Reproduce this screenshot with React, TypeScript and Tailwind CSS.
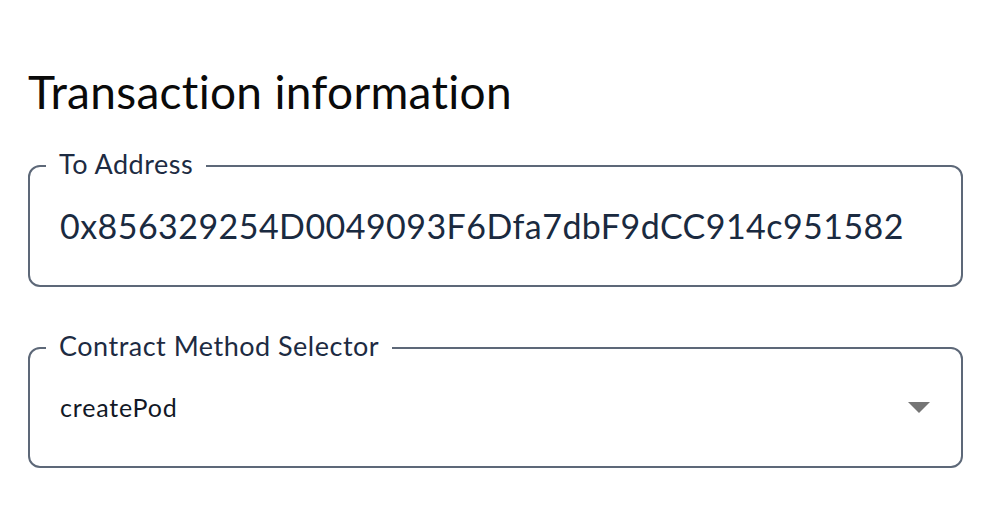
const font = { fontFamily: 'Lato, "Noto Sans", sans-serif' };

type OutlinedFieldProps = {
  label: string;
  children: React.ReactNode;
  className?: string;
};

const OutlinedField = ({ label, children, className }: OutlinedFieldProps) => (
  <div
    className={`relative flex items-center rounded-[12px] border-2 border-[#5d6878] pl-[30px] pr-[30px] ${className ?? ''}`}
  >
    <span className="absolute -top-[19px] left-[16px] bg-white px-[13px] text-[27px] leading-[32px] tracking-[0.5px] text-[#1d2b42]">
      {label}
    </span>
    {children}
  </div>
);

export default function App() {
  return (
    <div className="min-h-[508px] w-[1002px] bg-white pt-[64px] pl-[28px] pr-[39px]" style={font}>
      <h1 className="text-[46px] leading-[56px] font-normal tracking-[0.3px] text-[#0a0a0a]">
        Transaction information
      </h1>

      <OutlinedField label="To Address" className="mt-[45px] h-[122px]">
        <span className="text-[34px] leading-none tracking-[0.45px] text-[#1a2a40]">
          0x856329254D0049093F6Dfa7dbF9dCC914c951582
        </span>
      </OutlinedField>

      <OutlinedField label="Contract Method Selector" className="mt-[60px] h-[121px] justify-between">
        <span className="text-[25px] leading-none tracking-[0.8px] text-[#121826]">createPod</span>
        <svg width="22" height="11" viewBox="0 0 22 11" className="mr-[1px]">
          <path d="M0 0h22L11 11z" fill="#757575" />
        </svg>
      </OutlinedField>
    </div>
  );
}
